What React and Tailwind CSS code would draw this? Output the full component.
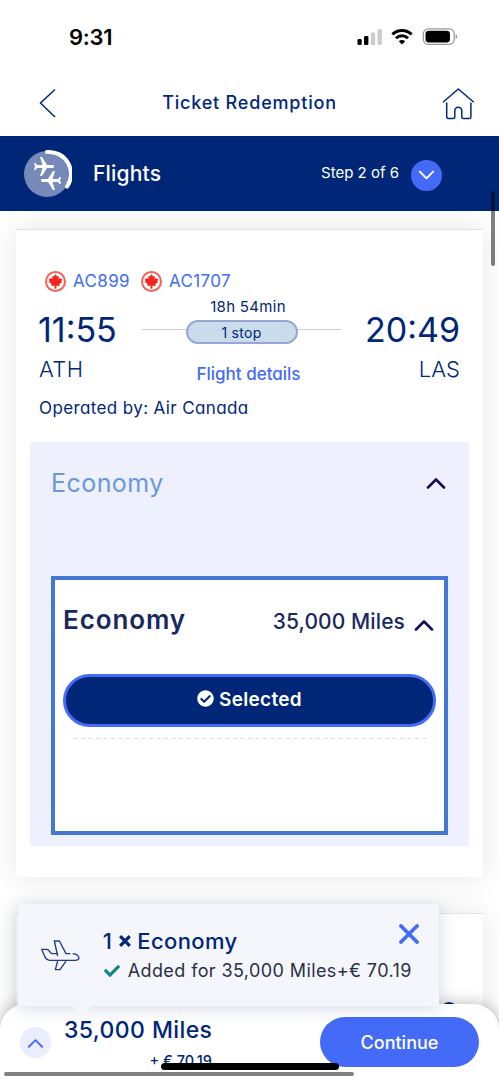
import React from "react";
import { FaCanadianMapleLeaf, FaCheck, FaCheckCircle } from "react-icons/fa";
import { MdFlight } from "react-icons/md";

const flights = ["AC899", "AC1707"];

const Chevron = ({ className, up, stroke = 2 }) => (
  <svg viewBox="0 0 20 12" fill="none" className={className}>
    <path
      d={up ? "M2 10.5 10 2.5l8 8" : "M2 2l8 8 8-8"}
      stroke="currentColor"
      strokeWidth={stroke}
      strokeLinecap="round"
      strokeLinejoin="round"
    />
  </svg>
);

const StatusBar = () => (
  <div className="flex h-[70px] shrink-0 items-start justify-between pt-[25px] pr-[41px] pl-[69px] text-black">
    <p className="text-[22px] leading-6 font-semibold tracking-[-0.3px]">9:31</p>
    <div className="flex items-center pt-[3px]">
      <svg viewBox="0 0 26 17" className="h-[17px] w-[26px]">
        <rect x="0.5" y="11" width="4.2" height="6" rx="1.2" />
        <rect x="7" y="8" width="4.4" height="9" rx="1.2" />
        <rect x="13.8" y="4.5" width="4.4" height="12.5" rx="1.2" fill="#ccc" />
        <rect x="20.5" y="1" width="4.4" height="16" rx="1.2" fill="#ccc" />
      </svg>
      <svg viewBox="0 0 22 17" className="ml-[8px] h-[17px] w-[22px]">
        <g fill="none" stroke="#000" strokeWidth="3">
          <path d="M1.4 6.4a13.6 13.6 0 0 1 19.2 0" />
          <path d="M5 10.3a8.5 8.5 0 0 1 12 0" />
        </g>
        <path d="M7.8 13.3a4.6 4.6 0 0 1 6.4 0L11 16.6z" />
      </svg>
      <svg viewBox="0 0 36 17" className="ml-[9px] h-[17px] w-[36px]">
        <rect x="1.3" y="0.9" width="31" height="15.4" rx="5" fill="none" stroke="#999" strokeWidth="1.3" />
        <rect x="3.5" y="2.8" width="24.5" height="11.6" rx="3.4" />
        <path d="M33.7 6.2c2 .8 2 4 0 4.8z" fill="#999" />
      </svg>
    </div>
  </div>
);

const Header = () => (
  <div className="flex h-[66px] shrink-0 items-center justify-between pr-[24px] pl-[39px] text-[#00287d]">
    <svg viewBox="0 0 18 30" fill="none" className="h-[30px] w-[18px]">
      <path d="M16 1.5 1.5 15 16 29" stroke="currentColor" strokeWidth="1.5" />
    </svg>
    <p className="mb-[2px] text-[18px] font-medium tracking-[0.8px]">Ticket Redemption</p>
    <svg viewBox="0 0 33 33" fill="none" stroke="currentColor" strokeWidth="1.5" className="h-[33px] w-[33px]">
      <path d="M1 15.2 16.3 2l15.5 13.2" strokeLinejoin="round" />
      <path
        d="M4.7 15.5v14a2 2 0 0 0 2 2h4.6a1.5 1.5 0 0 0 1.5-1.5v-6.2a3.5 3.5 0 0 1 7 0V30a1.5 1.5 0 0 0 1.5 1.5h6a1.6 1.6 0 0 0 1.6-1.6V15.5"
      />
    </svg>
  </div>
);

const StepBar = () => (
  <div className="relative z-10 flex h-[75px] shrink-0 items-center bg-[#002677] pr-[57px] pl-[24px] text-white">
    <div className="relative mb-[2px] h-[48px] w-[48px]">
      <svg viewBox="0 0 48 48" fill="none" className="h-[48px] w-[48px]">
        <circle cx="23" cy="25" r="23" fill="#7789b8" />
        <path d="M23 3a22 22 0 0 1 20 34.6" stroke="#fff" strokeWidth="4" strokeLinecap="round" />
      </svg>
      <MdFlight className="absolute top-[6px] left-[8px] h-[24px] w-[24px] rotate-90" />
      <MdFlight className="absolute top-[19px] left-[15px] h-[24px] w-[24px] -rotate-90" />
    </div>
    <p className="ml-[21px] text-[21px] font-medium tracking-[0.2px]">Flights</p>
    <p className="mr-[12px] ml-auto text-[15px]">Step 2 of 6</p>
    <div className="mt-[3px] flex h-[31px] w-[31px] items-center justify-center rounded-full bg-[#436bf8]">
      <Chevron className="h-[10px] w-[17px]" stroke={2.4} />
    </div>
  </div>
);

const FlightInfo = () => (
  <div className="h-[212px] px-[23px] pt-[39px] text-[#002677]">
    <div className="flex h-[24px] items-center pl-[6px] text-[17px] text-[#436bf8]">
      {flights.map((code) => (
        <div key={code} className="mr-[11px] flex items-center">
          <span className="flex h-[21px] w-[21px] items-center justify-center rounded-full border-2 border-[#f3625b]">
            <FaCanadianMapleLeaf
              className="h-[13px] w-[13px] overflow-visible text-[#f0281e]"
              stroke="currentColor"
              strokeWidth={50}
              strokeLinejoin="round"
            />
          </span>
          <span className="mt-px ml-[7px] tracking-[0.35px]">{code}</span>
        </div>
      ))}
    </div>
    <div className="mt-[2px] flex h-[92px] justify-between">
      <div className="w-[102px] pt-[15px]">
        <p className="-ml-px text-[34px] leading-[40px]">11:55</p>
        <p className="mt-[6px] text-[22px] leading-[26px] font-light tracking-[0.4px]">ATH</p>
      </div>
      <div className="flex w-[199px] flex-col items-center">
        <p className="pl-[13px] text-[15px] leading-[24px] tracking-[0.3px]">18h 54min</p>
        <div className="mt-px flex w-full items-center">
          <span className="mb-[5px] h-px flex-1 bg-[#c6cfe4]" />
          <span className="flex h-[24px] w-[112px] items-center justify-center rounded-full border-2 border-[#97a6d3] bg-[#cadceb] text-[14px] tracking-[0.3px]">
            1 stop
          </span>
          <span className="mb-[5px] h-px flex-1 bg-[#c6cfe4]" />
        </div>
        <p className="mt-[18px] pl-[14px] text-[17px] leading-[24px] font-medium text-[#436bf8]">Flight details</p>
      </div>
      <div className="w-[118px] pt-[15px] text-right">
        <p className="text-[34px] leading-[40px]">20:49</p>
        <p className="mt-[6px] text-[22px] leading-[26px] font-light">LAS</p>
      </div>
    </div>
    <p className="mt-[9px] text-[17px] leading-[24px] tracking-[0.38px]">Operated by: Air Canada</p>
  </div>
);

const FarePanel = () => (
  <div className="mx-[14px] h-[404px] bg-[#eef1fd] px-[21px]">
    <div className="flex h-[134px] items-start justify-between pt-[25px] pr-[2px]">
      <p className="text-[25px] leading-[32px] tracking-[0.45px] text-[#6a97db]">Economy</p>
      <Chevron up stroke={2.6} className="mt-[10px] h-[12px] w-[20px] text-[#160f52]" />
    </div>
    <div className="h-[259px] border-4 border-[#4277d2] bg-white px-[8px]">
      <div className="flex h-[94px] items-start pt-[23px] pr-[2px]">
        <p className="text-[26px] leading-[34px] font-semibold tracking-[0.9px] text-[#19295f]">Economy</p>
        <p className="ml-auto pt-[2px] text-[21px] leading-[34px] font-medium tracking-[0.1px] text-[#19295f]">35,000 Miles</p>
        <Chevron up stroke={2.6} className="mt-[16px] ml-[9px] h-[12px] w-[20px] text-[#160f52]" />
      </div>
      <button className="flex h-[53px] w-full items-center justify-center rounded-full border-[3px] border-[#436bf8] bg-[#002677] text-white">
        <FaCheckCircle className="mb-[4px] h-[17px] w-[17px]" />
        <span className="ml-[5px] text-[19px] font-semibold tracking-[0.3px]">Selected</span>
      </button>
      <div className="mx-[10px] mt-[11px] h-px bg-[repeating-linear-gradient(90deg,#dcdcdc_0_4px,transparent_4px_7.6px)]" />
    </div>
  </div>
);

const AddedToast = () => (
  <div className="absolute top-[904px] left-[18px] z-30 flex h-[102px] w-[421px] bg-[#f4f6fc] shadow-[0_2px_16px_rgba(40,60,120,0.2)]">
    <svg
      viewBox="120 146 122 98"
      fill="none"
      stroke="#1c3c8c"
      strokeWidth="4"
      strokeLinejoin="round"
      className="mt-[34.7px] ml-[22px] h-[32.7px] w-[40.7px] shrink-0"
    >
      <path d="M174 190h-16c-3 0-5-1-7-4l-6-7q-2-2-5-2h-15l9 21q6 12 17 12h74q11 0 12-7-2-11-19-13" />
      <path d="M173 197l-10-45h15l20 38h13" />
      <path d="M173 212l-7 26h14l18-26" />
    </svg>
    <div className="ml-[22px] pt-[22px]">
      <p className="flex items-center text-[22px] leading-[30px] font-medium tracking-[0.4px] text-[#002677]">
        1
        <svg viewBox="0 0 12 12" className="mr-[6px] ml-[7px] h-[12px] w-[12px]" stroke="currentColor" strokeWidth="3.2">
          <path d="M1.2 1.2l9.6 9.6M10.8 1.2l-9.6 9.6" />
        </svg>
        Economy
      </p>
      <p className="mt-px flex items-center text-[18px] leading-[28px] tracking-[0.4px] whitespace-nowrap text-[#2b3044]">
        <FaCheck className="mr-[8px] ml-[1px] h-[16px] w-[16px] text-[#128488]" />
        <span>Added for 35,000 Miles+€ 70.19</span>
      </p>
    </div>
    <svg viewBox="0 0 20 20" className="absolute top-[20px] right-[20px] h-[20px] w-[20px]">
      <path d="M2 2l16 16M18 2 2 18" stroke="#436bf8" strokeWidth="3.8" strokeLinecap="round" />
    </svg>
    <svg viewBox="0 0 20 10" className="absolute top-full left-[54px] h-[10px] w-[20px]">
      <path d="M0 0h20L10 10z" fill="#f4f6fc" />
    </svg>
  </div>
);

const BottomBar = () => (
  <div className="absolute bottom-0 left-0 z-20 flex h-[76px] w-full rounded-t-[26px] bg-white pr-[20px] pl-[20px] shadow-[0_0_16px_rgba(0,0,0,0.3)]">
    <div className="mt-[23px] flex h-[31px] w-[31px] items-center justify-center rounded-full bg-[#e9edfe] text-[#436bf8]">
      <Chevron up className="h-[10px] w-[17px]" stroke={2.2} />
    </div>
    <div className="ml-[13px] w-[148px] pt-[12px] text-right whitespace-nowrap text-[#002677]">
      <p className="text-[23px] leading-[28px] font-medium tracking-[0.4px]">35,000 Miles</p>
      <p className="mt-[7px] text-[14.5px] leading-[20px] font-medium">+ € 70.19</p>
    </div>
    <button className="mt-[13px] ml-auto h-[50px] w-[159px] rounded-full bg-[#436bf8] text-[18px] font-medium text-white">
      Continue
    </button>
  </div>
);

const App = () => {
  return (
    <div className="relative flex h-[1080px] w-[499px] flex-col overflow-hidden bg-white font-['Inter','Lato',sans-serif] [font-feature-settings:'cv11']">
      <StatusBar />
      <Header />
      <StepBar />
      <div className="flex flex-1 flex-col gap-[36px] px-[16px] pt-[18px]">
        <div className="h-[648px] shrink-0 border-t border-[#e2e2e2] bg-white shadow-[0_0_28px_rgba(0,0,0,0.1)]">
          <FlightInfo />
          <FarePanel />
        </div>
        <div className="flex h-[180px] shrink-0 items-start justify-end border-t border-[#e2e2e2] bg-white pt-[88px] pr-[25px] shadow-[0_0_28px_rgba(0,0,0,0.1)]">
          <span className="h-[18px] w-[18px] rounded-full bg-[#002677]" />
        </div>
      </div>
      <BottomBar />
      <AddedToast />
      {/* scroll thumbs and home indicator */}
      <span className="absolute top-[191px] left-[491px] z-40 h-[75px] w-[4px] rounded-full bg-black/50" />
      <span className="absolute top-[1072px] left-[4px] z-40 h-[4px] w-[350px] rounded-full bg-[#808080]" />
      <span className="absolute top-[1063px] left-[161px] z-40 h-[7px] w-[178px] rounded-full bg-black" />
    </div>
  );
};

export default App;
